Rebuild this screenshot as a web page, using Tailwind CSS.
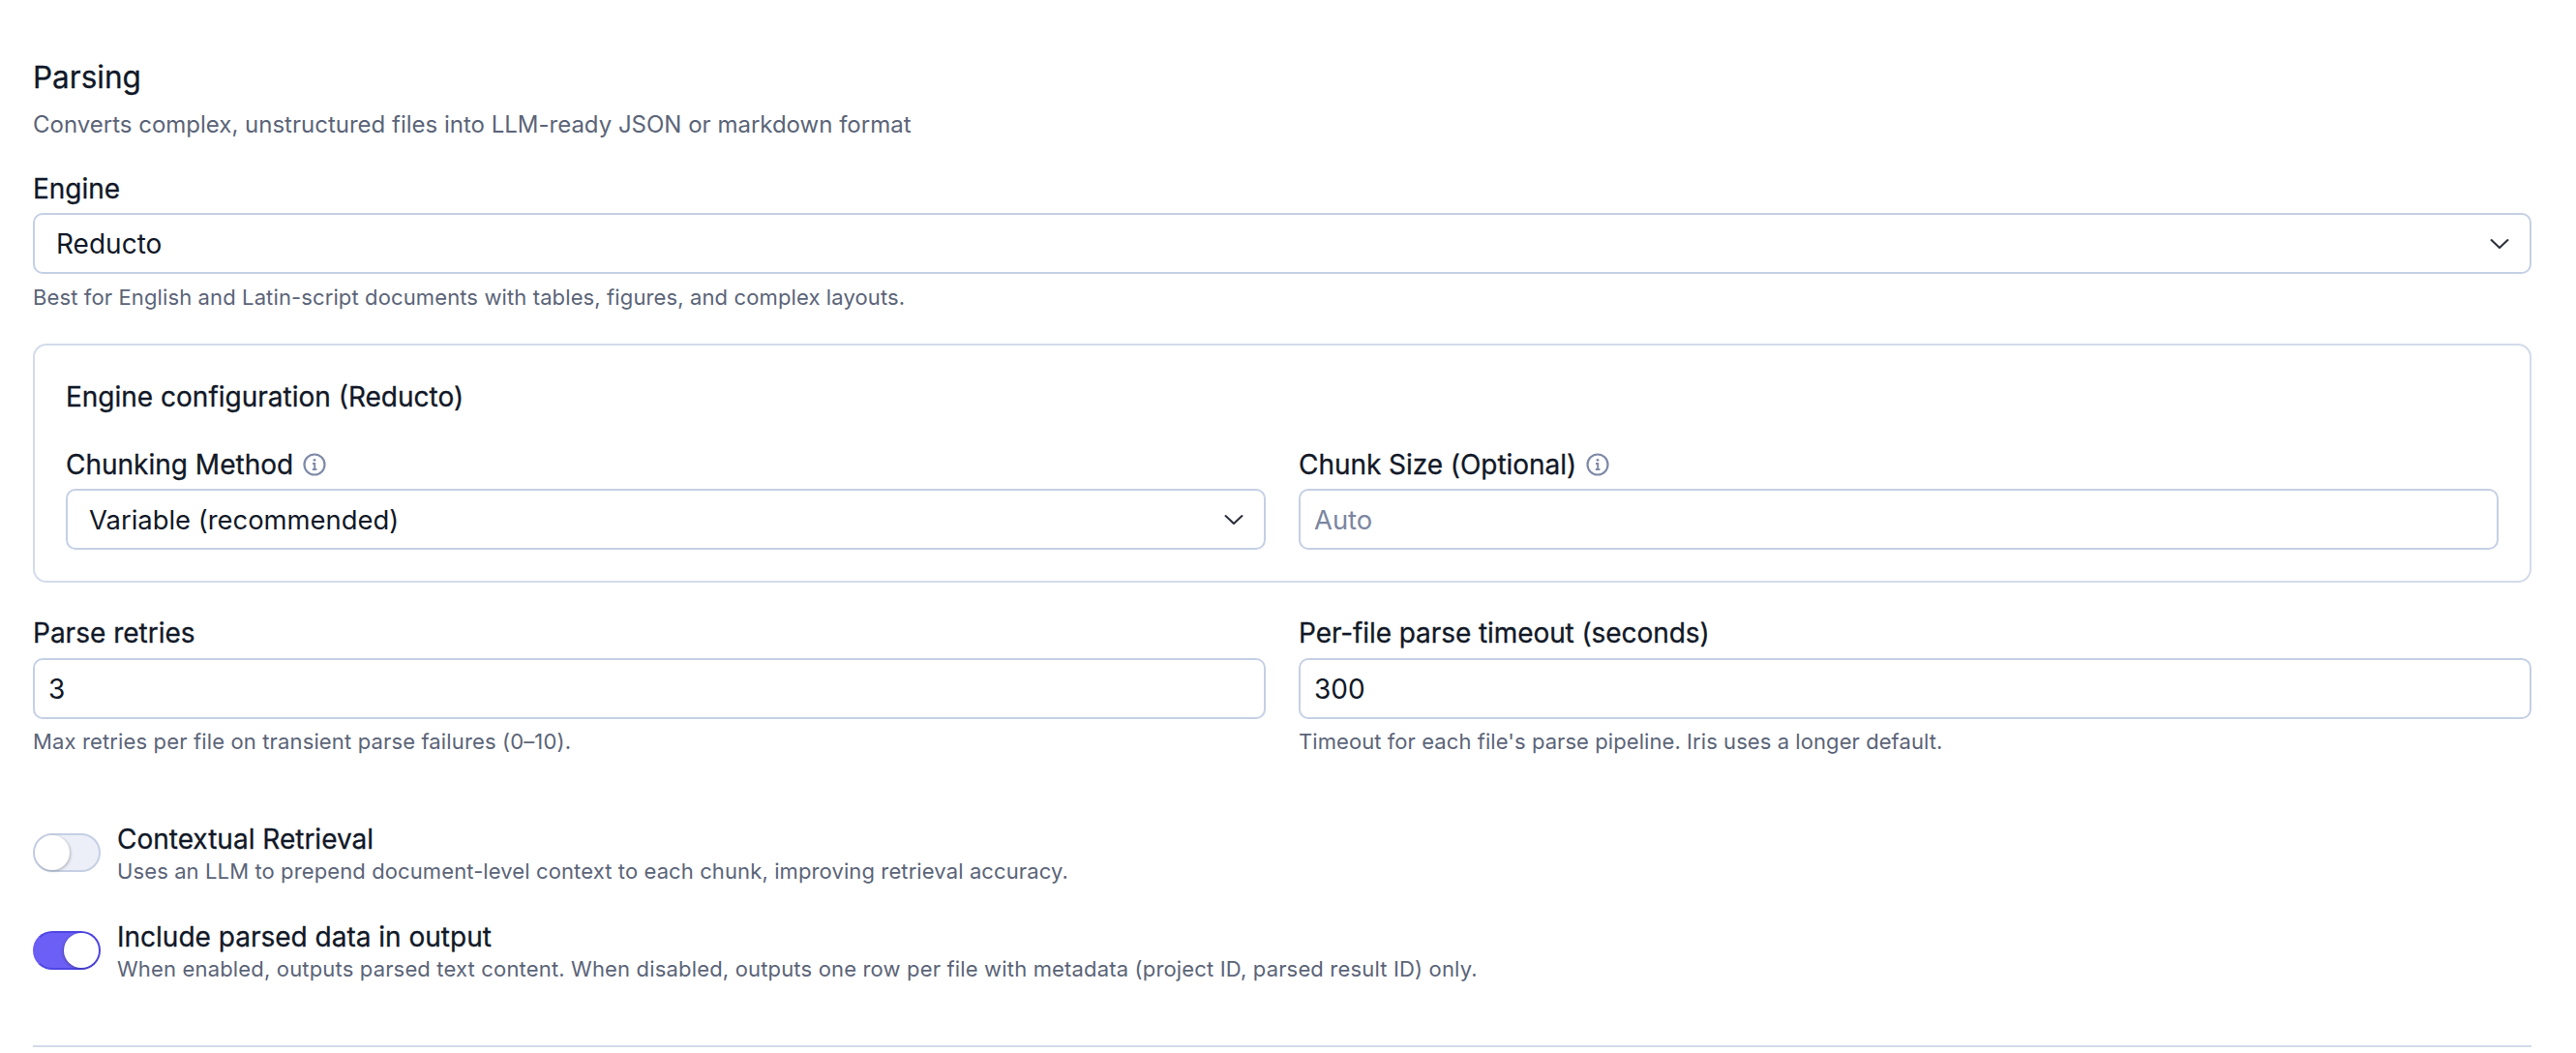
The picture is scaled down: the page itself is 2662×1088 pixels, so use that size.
<!doctype html>
<html><head><meta charset="utf-8"><script src="https://cdn.jsdelivr.net/npm/@tailwindcss/browser@4"></script></head>
<body class="bg-white overflow-hidden">
<div class="w-[2662px] h-[1088px] overflow-hidden pl-[34px] pr-[46px] pt-[60px] font-['Inter',sans-serif] text-[#111827]">
  <h2 class="text-[31.5px] leading-[40px] [-webkit-text-stroke:0.3px]">Parsing</h2>
  <p class="mt-[13px] text-[24px] leading-[32px] text-[#5b6478]">Converts complex, unstructured files into LLM-ready JSON or markdown format</p>
  <label class="block mt-[30px] text-[28px] leading-[40px] [-webkit-text-stroke:0.3px]">Engine</label>
  <div class="mt-[5px] h-[63px] border-2 border-[#c5d0e4] rounded-[10px] pl-[22px] pr-[18px] flex items-center justify-between text-[28px]">
    <span class="pt-[1px]">Reducto</span>
    <svg class="w-[26px] h-[26px] text-[#2a2f3a]" viewBox="0 0 20 20" fill="none" stroke="currentColor" stroke-width="1.6" stroke-linecap="round" stroke-linejoin="round"><path d="M3.5 7l6.5 6L16.5 7"/></svg>
  </div>
  <p class="mt-[9px] text-[22px] leading-[30px] tracking-[0.12px] text-[#5b6478]">Best for English and Latin-script documents with tables, figures, and complex layouts.</p>
  <div class="mt-[33px] h-[247px] border-2 border-[#d3dbea] rounded-[14px] px-[32px] pt-[35px]">
    <h3 class="text-[28px] leading-[36px] [-webkit-text-stroke:0.3px]">Engine configuration (Reducto)</h3>
    <div class="mt-[32px] grid grid-cols-2 gap-x-[34px]">
      <div>
        <div class="flex items-center gap-[10px] text-[28px] leading-[40px] [-webkit-text-stroke:0.3px]">Chunking Method
          <svg class="w-[24px] h-[24px] text-[#7e8aa8]" viewBox="0 0 24 24" fill="none" stroke="currentColor" stroke-width="2.2"><circle cx="12" cy="12" r="10.5"/><path d="M10 11h2.2v6M9.8 17h4.6" stroke-width="2"/><circle cx="12" cy="7.3" r="1.4" fill="currentColor" stroke="none"/></svg>
        </div>
        <div class="mt-[5px] h-[63px] border-2 border-[#c5d0e4] rounded-[10px] pl-[22px] pr-[18px] flex items-center justify-between text-[27.4px]">
          <span class="pt-[2px]">Variable (recommended)</span>
          <svg class="w-[26px] h-[26px] text-[#2a2f3a]" viewBox="0 0 20 20" fill="none" stroke="currentColor" stroke-width="1.6" stroke-linecap="round" stroke-linejoin="round"><path d="M3.5 7l6.5 6L16.5 7"/></svg>
        </div>
      </div>
      <div>
        <div class="flex items-center gap-[10px] text-[28px] leading-[40px] tracking-[-0.05px] [-webkit-text-stroke:0.3px]">Chunk Size (Optional)
          <svg class="w-[24px] h-[24px] text-[#7e8aa8]" viewBox="0 0 24 24" fill="none" stroke="currentColor" stroke-width="2.2"><circle cx="12" cy="12" r="10.5"/><path d="M10 11h2.2v6M9.8 17h4.6" stroke-width="2"/><circle cx="12" cy="7.3" r="1.4" fill="currentColor" stroke="none"/></svg>
        </div>
        <div class="mt-[5px] h-[63px] border-2 border-[#c5d0e4] rounded-[10px] pl-[14px] pt-[2px] flex items-center text-[27.4px] text-[#7b86a0]">Auto</div>
      </div>
    </div>
  </div>
  <div class="mt-[32px] grid grid-cols-2 gap-x-[34px]">
    <div>
      <div class="text-[28px] leading-[40px] [-webkit-text-stroke:0.3px]">Parse retries</div>
      <div class="mt-[6px] h-[63px] border-2 border-[#c5d0e4] rounded-[10px] pl-[14px] flex items-center text-[28px]">3</div>
      <p class="mt-[8px] text-[22px] leading-[30px] tracking-[0.14px] text-[#5b6478]">Max retries per file on transient parse failures (0–10).</p>
    </div>
    <div>
      <div class="text-[28px] leading-[40px] tracking-[-0.08px] [-webkit-text-stroke:0.3px]">Per-file parse timeout (seconds)</div>
      <div class="mt-[6px] h-[63px] border-2 border-[#c5d0e4] rounded-[10px] pl-[14px] flex items-center text-[28px]">300</div>
      <p class="mt-[8px] text-[22px] leading-[30px] tracking-[0.07px] text-[#5b6478]">Timeout for each file's parse pipeline. Iris uses a longer default.</p>
    </div>
  </div>
  <div class="mt-[69px] flex gap-[17px]">
    <div class="relative mt-[11px] w-[70px] h-[40px] rounded-full border-2 border-[#c5d0e4] bg-[#eceff8]">
      <span class="absolute left-[0px] top-[0px] w-[36px] h-[36px] rounded-full bg-white shadow-[1px_1px_3px_rgba(0,0,0,0.25)]"></span>
    </div>
    <div>
      <div class="text-[28px] leading-[35px] [-webkit-text-stroke:0.3px]">Contextual Retrieval</div>
      <div class="text-[22px] leading-[30px] tracking-[0.11px] text-[#5b6478]">Uses an LLM to prepend document-level context to each chunk, improving retrieval accuracy.</div>
    </div>
  </div>
  <div class="mt-[36px] flex gap-[17px]">
    <div class="relative mt-[11px] w-[70px] h-[40px] rounded-full border-2 border-[#4f46e5] border-l-[#6c5ff5] bg-[#6c5ff5]">
      <span class="absolute right-[0px] top-[0px] w-[36px] h-[36px] rounded-full bg-white shadow-[-1px_1px_3px_rgba(0,0,0,0.25)]"></span>
    </div>
    <div>
      <div class="text-[28px] leading-[35px] [-webkit-text-stroke:0.3px]">Include parsed data in output</div>
      <div class="text-[22px] leading-[30px] tracking-[0.165px] text-[#5b6478]">When enabled, outputs parsed text content. When disabled, outputs one row per file with metadata (project ID, parsed result ID) only.</div>
    </div>
  </div>
  <div class="mt-[64px] h-[2px] bg-[#d3dbea]"></div>
</div>
</body></html>
